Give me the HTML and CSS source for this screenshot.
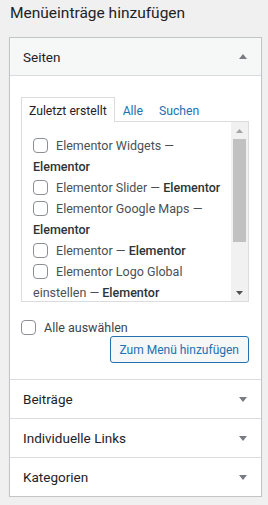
FILE: index.html
```html
<!DOCTYPE html>
<html lang="de">
<head>
    <meta charset="UTF-8">
    <meta name="viewport" content="width=device-width, initial-scale=1.0">
    <title>Menüeinträge hinzufügen</title>
    <link rel="stylesheet" href="styles.css">
</head>
<body>
    <h2 class="page-title">Menüeinträge hinzufügen</h2>

    <div class="accordion">
        <div class="section open">
            <div class="section-head">
                <span>Seiten</span>
                <svg class="arrow" width="8" height="5" viewBox="0 0 8 5"><path d="M0 5 L4 0 L8 5 Z"/></svg>
            </div>
            <div class="section-body">
                <ul class="tabs">
                    <li class="tab active">Zuletzt erstellt</li>
                    <li class="tab">Alle</li>
                    <li class="tab">Suchen</li>
                </ul>
                <div class="tabs-panel">
                    <ul class="items">
                        <li><label><input type="checkbox"> Elementor Widgets — <b>Elementor</b></label></li>
                        <li><label><input type="checkbox"> Elementor Slider — <b>Elementor</b></label></li>
                        <li><label><input type="checkbox"> Elementor Google Maps — <b>Elementor</b></label></li>
                        <li><label><input type="checkbox"> Elementor — <b>Elementor</b></label></li>
                        <li><label><input type="checkbox"> Elementor Logo Global einstellen — <b>Elementor</b></label></li>
                    </ul>
                    <div class="scrollbar">
                        <div class="scroll-btn up"><svg width="7" height="4" viewBox="0 0 7 4"><path d="M0 4 L3.5 0 L7 4 Z"/></svg></div>
                        <div class="scroll-track"><div class="scroll-thumb"></div></div>
                        <div class="scroll-btn down"><svg width="7" height="4" viewBox="0 0 7 4"><path d="M0 0 L3.5 4 L7 0 Z"/></svg></div>
                    </div>
                </div>
                <label class="select-all"><input type="checkbox"> Alle auswählen</label>
                <div class="actions">
                    <button class="button">Zum Menü hinzufügen</button>
                </div>
            </div>
        </div>

        <div class="section">
            <div class="section-head">
                <span>Beiträge</span>
                <svg class="arrow" width="8" height="5" viewBox="0 0 8 5"><path d="M0 0 L4 5 L8 0 Z"/></svg>
            </div>
        </div>
        <div class="section">
            <div class="section-head">
                <span>Individuelle Links</span>
                <svg class="arrow" width="8" height="5" viewBox="0 0 8 5"><path d="M0 0 L4 5 L8 0 Z"/></svg>
            </div>
        </div>
        <div class="section">
            <div class="section-head">
                <span>Kategorien</span>
                <svg class="arrow" width="8" height="5" viewBox="0 0 8 5"><path d="M0 0 L4 5 L8 0 Z"/></svg>
            </div>
        </div>
    </div>
</body>
</html>
```
FILE: styles.css
```css
body {
    margin: 0;
    padding: 0 6px 0 9px;
    background-color: #f0f0f1;
    font-family: Roboto, Arial, sans-serif;
    font-size: 12.5px;
    color: #3c434a;
}

.page-title {
    margin: 0;
    padding: 4px 0 0 1px;
    height: 33px;
    font-size: 15.5px;
    font-weight: 400;
    color: #1d2327;
}

.accordion {
    background-color: #fff;
    border: 1px solid #c3c4c7;
    box-shadow: 0 1px 1px rgba(0, 0, 0, 0.08);
}

.section {
    border-bottom: 1px solid #dcdcde;
}

.section:last-child {
    border-bottom: 0;
}

.section-head {
    height: 38px;
    display: flex;
    align-items: center;
    justify-content: space-between;
    padding: 0 14px 0 13px;
    font-size: 13.5px;
    color: #1d2327;
}

.section.open .section-head {
    height: 37px;
    background-color: #f6f7f7;
    border-bottom: 1px solid #dcdcde;
}

.arrow {
    fill: #787c82;
}

.section-body {
    padding: 21px 12px 16px 11px;
}

.tabs {
    list-style: none;
    margin: 0;
    padding: 0;
    display: flex;
    font-size: 12.2px;
}

.tab {
    padding: 2px 7px 0;
    height: 21px;
    line-height: 23px;
    border: 1px solid transparent;
    border-bottom: 0;
    color: #2271b1;
}

.tab.active {
    background-color: #fff;
    border-color: #dcdcde;
    color: #1d2327;
    margin-bottom: -1px;
    position: relative;
    height: 22px;
}

.tabs-panel {
    display: flex;
    height: 179px;
    border: 1px solid #dcdcde;
}

.items {
    flex: 1;
    list-style: none;
    margin: 0;
    padding: 13px 4px 0 11px;
    overflow: hidden;
    line-height: 21px;
}

.items label {
    color: #4a5056;
}

.items b {
    font-weight: 500;
    color: #2c3338;
}

input[type="checkbox"] {
    appearance: none;
    -webkit-appearance: none;
    width: 15px;
    height: 15px;
    margin: 0 5px 0 0;
    border: 1px solid #8c8f94;
    border-radius: 4px;
    background-color: #fff;
    vertical-align: -3px;
}

.scrollbar {
    width: 17px;
    display: flex;
    flex-direction: column;
    background-color: #f1f1f1;
}

.scroll-btn {
    height: 17px;
    display: flex;
    align-items: center;
    justify-content: center;
}

.scroll-btn.up svg {
    fill: #a3a3a3;
}

.scroll-btn.down svg {
    fill: #505050;
}

.scroll-track {
    flex: 1;
    padding: 0 2px;
}

.scroll-thumb {
    height: 103px;
    background-color: #c1c1c1;
}

.select-all {
    display: flex;
    align-items: center;
    height: 15px;
    margin-top: 18px;
    color: #3c434a;
}

.select-all input {
    margin-right: 8px;
}

.actions {
    display: flex;
    justify-content: flex-end;
    margin-top: 1px;
}

.button {
    height: 27px;
    padding: 0 9px;
    font-family: inherit;
    font-size: 12px;
    color: #2271b1;
    background-color: #f6f7f7;
    border: 1px solid #2271b1;
    border-radius: 3px;
}
```
